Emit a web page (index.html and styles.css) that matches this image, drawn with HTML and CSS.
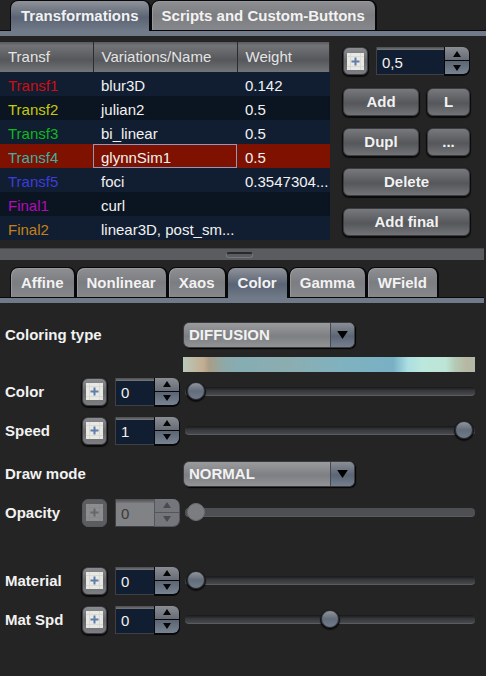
FILE: index.html
```html
<!DOCTYPE html>
<html lang="en">
<head>
<meta charset="utf-8">
<meta name="viewport" content="width=device-width, initial-scale=1">
<title>Transformations</title>
<link rel="stylesheet" href="styles.css">
</head>
<body>
<svg width="0" height="0" class="defs" aria-hidden="true">
  <symbol id="grid-plus" viewBox="0 0 17 17">
    <rect width="17" height="17" fill="#e9e9e4"/>
    <path d="M3.5 0v17M13.5 0v17M0 3.5h17M0 13.5h17" stroke="#d9dad6" stroke-width="1"/>
    <path d="M8.5 4.5v8M4.5 8.5h8" stroke="#5f7da8" stroke-width="2"/>
  </symbol>
  <symbol id="up" viewBox="0 0 8 6"><path d="M4 0L8 6H0z" fill="currentColor"/></symbol>
  <symbol id="down" viewBox="0 0 8 6"><path d="M0 0h8L4 6z" fill="currentColor"/></symbol>
</svg>

<nav class="tabs" role="tablist">
  <button class="tab active" role="tab" aria-selected="true">Transformations</button>
  <button class="tab" role="tab" aria-selected="false">Scripts and Custom-Buttons</button>
</nav>

<section class="upper">
  <table class="transforms">
    <colgroup><col class="c-id"><col class="c-name"><col class="c-weight"></colgroup>
    <thead><tr><th>Transf</th><th>Variations/Name</th><th>Weight</th></tr></thead>
    <tbody>
      <tr><td class="red">Transf1</td><td>blur3D</td><td>0.142</td></tr>
      <tr><td class="yellow">Transf2</td><td>julian2</td><td>0.5</td></tr>
      <tr><td class="green">Transf3</td><td>bi_linear</td><td>0.5</td></tr>
      <tr class="selected"><td class="teal">Transf4</td><td class="focus">glynnSim1</td><td>0.5</td></tr>
      <tr><td class="blue">Transf5</td><td>foci</td><td>0.3547304...</td></tr>
      <tr><td class="magenta">Final1</td><td>curl</td><td></td></tr>
      <tr><td class="orange">Final2</td><td>linear3D, post_sm...</td><td></td></tr>
    </tbody>
  </table>
  <div class="actions">
    <div class="weight-row">
      <button class="btn icon-btn" aria-label="Weight curve"><svg><use href="#grid-plus"/></svg></button>
      <div class="spinner">
        <input type="text" value="0,5" aria-label="Weight">
        <div class="steps">
          <button aria-label="Increase"><svg><use href="#up"/></svg></button>
          <button aria-label="Decrease"><svg><use href="#down"/></svg></button>
        </div>
      </div>
    </div>
    <div class="pair"><button class="btn">Add</button><button class="btn">L</button></div>
    <div class="pair"><button class="btn">Dupl</button><button class="btn">...</button></div>
    <button class="btn">Delete</button>
    <button class="btn">Add final</button>
  </div>
</section>

<div class="splitter" role="separator"><span class="grip"></span></div>

<section class="lower">
  <nav class="tabs" role="tablist">
    <button class="tab" role="tab">Affine</button>
    <button class="tab" role="tab">Nonlinear</button>
    <button class="tab" role="tab">Xaos</button>
    <button class="tab active" role="tab" aria-selected="true">Color</button>
    <button class="tab" role="tab">Gamma</button>
    <button class="tab" role="tab">WField</button>
  </nav>

  <form class="form">
    <div class="row">
      <label for="coloring">Coloring type</label>
      <div class="combo">
        <select id="coloring"><option>DIFFUSION</option></select>
        <span class="arrow"><svg><use href="#down"/></svg></span>
      </div>
    </div>
    <div class="palette"></div>
    <div class="row">
      <label for="color">Color</label>
      <button type="button" class="btn icon-btn" aria-label="Color curve"><svg><use href="#grid-plus"/></svg></button>
      <div class="spinner">
        <input type="text" id="color" value="0">
        <div class="steps">
          <button type="button" aria-label="Increase"><svg><use href="#up"/></svg></button>
          <button type="button" aria-label="Decrease"><svg><use href="#down"/></svg></button>
        </div>
      </div>
      <input type="range" min="0" max="100" value="0" aria-label="Color">
    </div>
    <div class="row">
      <label for="speed">Speed</label>
      <button type="button" class="btn icon-btn" aria-label="Speed curve"><svg><use href="#grid-plus"/></svg></button>
      <div class="spinner">
        <input type="text" id="speed" value="1">
        <div class="steps">
          <button type="button" aria-label="Increase"><svg><use href="#up"/></svg></button>
          <button type="button" aria-label="Decrease"><svg><use href="#down"/></svg></button>
        </div>
      </div>
      <input type="range" min="0" max="100" value="100" aria-label="Speed">
    </div>
    <div class="row draw-row">
      <label for="draw">Draw mode</label>
      <div class="combo">
        <select id="draw"><option>NORMAL</option></select>
        <span class="arrow"><svg><use href="#down"/></svg></span>
      </div>
    </div>
    <div class="row disabled">
      <label for="opacity">Opacity</label>
      <button type="button" class="btn icon-btn" aria-label="Opacity curve" disabled><svg><use href="#grid-plus"/></svg></button>
      <div class="spinner">
        <input type="text" id="opacity" value="0" disabled>
        <div class="steps">
          <button type="button" aria-label="Increase" disabled><svg><use href="#up"/></svg></button>
          <button type="button" aria-label="Decrease" disabled><svg><use href="#down"/></svg></button>
        </div>
      </div>
      <input type="range" min="0" max="100" value="0" aria-label="Opacity" disabled>
    </div>
    <div class="row material-row">
      <label for="material">Material</label>
      <button type="button" class="btn icon-btn" aria-label="Material curve"><svg><use href="#grid-plus"/></svg></button>
      <div class="spinner">
        <input type="text" id="material" value="0">
        <div class="steps">
          <button type="button" aria-label="Increase"><svg><use href="#up"/></svg></button>
          <button type="button" aria-label="Decrease"><svg><use href="#down"/></svg></button>
        </div>
      </div>
      <input type="range" min="0" max="100" value="0" aria-label="Material">
    </div>
    <div class="row">
      <label for="matspd">Mat Spd</label>
      <button type="button" class="btn icon-btn" aria-label="Material speed curve"><svg><use href="#grid-plus"/></svg></button>
      <div class="spinner">
        <input type="text" id="matspd" value="0">
        <div class="steps">
          <button type="button" aria-label="Increase"><svg><use href="#up"/></svg></button>
          <button type="button" aria-label="Decrease"><svg><use href="#down"/></svg></button>
        </div>
      </div>
      <input type="range" min="0" max="100" value="50" aria-label="Material speed">
    </div>
  </form>
</section>
</body>
</html>
```

FILE: styles.css
```css
* { box-sizing: border-box; }

body {
  margin: 0;
  background: #242424;
  color: #f2f2f2;
  font: 15px/18px "Liberation Sans", Arial, sans-serif;
}

button, input, select { font: inherit; color: inherit; margin: 0; }
.defs { display: block; height: 0; }

/* Tabs */
.tabs {
  display: flex;
  padding: 0 10px;
  border-bottom: 5px solid #707a88;
  box-shadow: inset 0 -1px #08080a;
}
.tab {
  height: 31px;
  padding: 0 10px;
  border: 1px solid #08080a;
  border-width: 1px 2px 1px 1px;
  border-radius: 8px 8px 0 0;
  background: linear-gradient(#8e8f92, #7c7d80 50%, #87888b);
  box-shadow: inset 1px 1px #98999c;
  font-weight: bold;
}
.tab.active {
  padding-bottom: 1px;
  border-bottom: 0;
  background: linear-gradient(#8f9299, #5a6474 55%, #707a88);
  box-shadow: none;
}

/* Upper pane */
.upper {
  display: flex;
  gap: 13px;
  padding: 6px 16px 8px 0;
}
.transforms {
  width: 100%;
  min-width: 0;
  align-self: flex-start;
  table-layout: fixed;
  border-collapse: collapse;
}
.c-id { width: 93px; }
.c-name { width: 144px; }
.transforms th {
  height: 30px;
  padding: 0 8px;
  border-right: 1px solid #2b2c2f;
  background: linear-gradient(#5a5b5e, #727376 12%, #55575a 60%, #737477);
  color: #e4e4e4;
  font-weight: normal;
  text-align: left;
}
.transforms td {
  height: 24px;
  padding: 3px 8px 0;
  white-space: nowrap;
  overflow: hidden;
}
.transforms tbody tr { background: #111e31; }
.transforms tbody tr:nth-child(even) { background: #0b1522; }
.transforms tbody tr.selected { background: #7e1100; }
.transforms .focus { box-shadow: inset 0 0 0 1px #9296b8; }
.red { color: #d20c12; }
.yellow { color: #c6c80e; }
.green { color: #0fb81c; }
.teal { color: #3cb0a6; }
.blue { color: #3c3cdc; }
.magenta { color: #b40cba; }
.orange { color: #c4801a; }

.actions {
  display: flex;
  flex-direction: column;
  flex: 0 0 127px;
  gap: 12px;
  padding-top: 5px;
}
.weight-row {
  display: grid;
  grid-template-columns: 25px 1fr;
  gap: 8px;
  margin-bottom: 1px;
}
.pair {
  display: grid;
  grid-template-columns: 1fr 43px;
  gap: 8px;
}

.btn {
  height: 28px;
  padding: 0;
  border: 1px solid #3c3d40;
  border-radius: 6px;
  background: linear-gradient(#77797c, #55575b 55%, #717377);
  box-shadow: 0 1px 1px 1px #0b0b0c;
  font-weight: bold;
}
.icon-btn {
  display: grid;
  place-items: center;
  width: 25px;
  background: linear-gradient(#8a8c90, #66686c 50%, #7c7e82);
}
.icon-btn svg { width: 17px; height: 17px; }

/* Spinner */
.spinner {
  display: grid;
  grid-template-columns: 1fr 26px;
  height: 28px;
}
.spinner input {
  width: 100%;
  min-width: 0;
  padding: 4px 0 0 5px;
  border: 1px solid #3f4043;
  border-width: 0 0 1px 1px;
  border-radius: 0;
  background: linear-gradient(#4c4d50, #77787b 3px, #111e31 3px);
}
.steps {
  display: grid;
  grid-template-rows: 1fr 1fr;
  gap: 1px;
  padding: 0 1px 1px;
  border-radius: 0 7px 7px 0;
  background: #08080a;
  box-shadow: 0 1px #08080a;
}
.steps button {
  display: grid;
  place-items: center;
  padding: 0;
  border: 0;
  border-radius: 0 6px 0 0;
  background: linear-gradient(#8a8d93, #666c76);
  color: #060607;
}
.steps button + button {
  border-radius: 0 0 6px 0;
  background: linear-gradient(#5a6473, #788392);
}
.steps svg { width: 8px; height: 6px; }

/* Splitter */
.splitter {
  display: grid;
  place-items: center;
  height: 12px;
  margin-right: 2px;
  border-top: 1px solid #47484b;
  background: #5b5c5f;
  padding-right: 5px;
}
.grip {
  width: 27px;
  height: 6px;
  border: 1px solid #76777b;
  border-top: 2px solid #28292b;
  border-radius: 3px;
}

/* Lower pane */
.lower { margin-right: 2px; padding-top: 7px; }

.form { padding: 12px 9px 0 5px; }
.row {
  display: grid;
  grid-template-columns: 77px 33px 68px 1fr;
  align-items: center;
  height: 39px;
}
.row label { font-weight: bold; white-space: nowrap; }
.row .spinner { width: 65px; }
.combo {
  grid-column: 4;
  display: grid;
  grid-template-columns: 1fr 24px;
  width: 172px;
  height: 26px;
  border: 1px solid #3b3c3f;
  border-radius: 6px;
  box-shadow: 1px 1px 1px #050505;
  overflow: hidden;
}
.combo select {
  grid-area: 1 / 1 / 2 / 3;
  padding: 0 5px;
  border: 0;
  appearance: none;
  background: linear-gradient(#9a9b9d, #7e7f82 55%, #929395);
  font-weight: bold;
}
.arrow {
  grid-area: 1 / 2;
  display: grid;
  place-items: center;
  border-left: 1px solid #444a54;
  background: linear-gradient(#8a8e95, #5b6575 55%, #75808f);
  color: #000;
  pointer-events: none;
}
.arrow svg { width: 11px; height: 8px; }
.palette {
  height: 15px;
  margin: 3px 0 0 178px;
  background: linear-gradient(90deg, #b9c9b8, #c3ad91 7%, #a99d88 9%, #8ea9a8 14%, #85adb4 20%, #8cadb0 35%, #7fb2c0 55%, #79b0c4 72%, #abdfe2 77%, #bce7dc 82%, #bde5d6 90%, #b4cbb7 93%, #b8b7a2 97%, #b0b9a8);
}
.draw-row { margin-top: 5px; height: 38px; }
.material-row { margin-top: 29px; }

/* Sliders */
input[type="range"] {
  appearance: none;
  width: calc(100% - 2px);
  height: 9px;
  margin-left: 2px;
  padding: 0 2px;
  border-bottom: 1px solid #5b5c5f;
  border-radius: 4px;
  background: linear-gradient(#17181a, #36373a 45%, #48494d);
}
input[type="range"]::-webkit-slider-thumb {
  appearance: none;
  width: 18px;
  height: 18px;
  border: 1px solid #2a2d33;
  border-radius: 50%;
  background: linear-gradient(#92959b, #626c7a 50%, #717c8a);
  box-shadow: 0 1px 1px 1px #0c0c0e;
}

/* Disabled row */
.disabled .icon-btn {
  border-color: #58595c;
  background: #5c5d60;
  box-shadow: none;
}
.disabled .icon-btn svg { opacity: 0.35; filter: grayscale(1); }
.disabled .spinner input {
  background: linear-gradient(#4c4d50, #77787b 4px, #818285 4px);
  color: #3a3a3c;
}
.disabled .steps { background: #55565a; box-shadow: none; }
.disabled .steps button,
.disabled .steps button + button { background: #74767b; color: #4a4b4e; }
.disabled input[type="range"] { background: #4e4f53; }
.disabled input[type="range"]::-webkit-slider-thumb {
  border-color: #6e6f72;
  background: #7c7d80;
  box-shadow: none;
}
```
